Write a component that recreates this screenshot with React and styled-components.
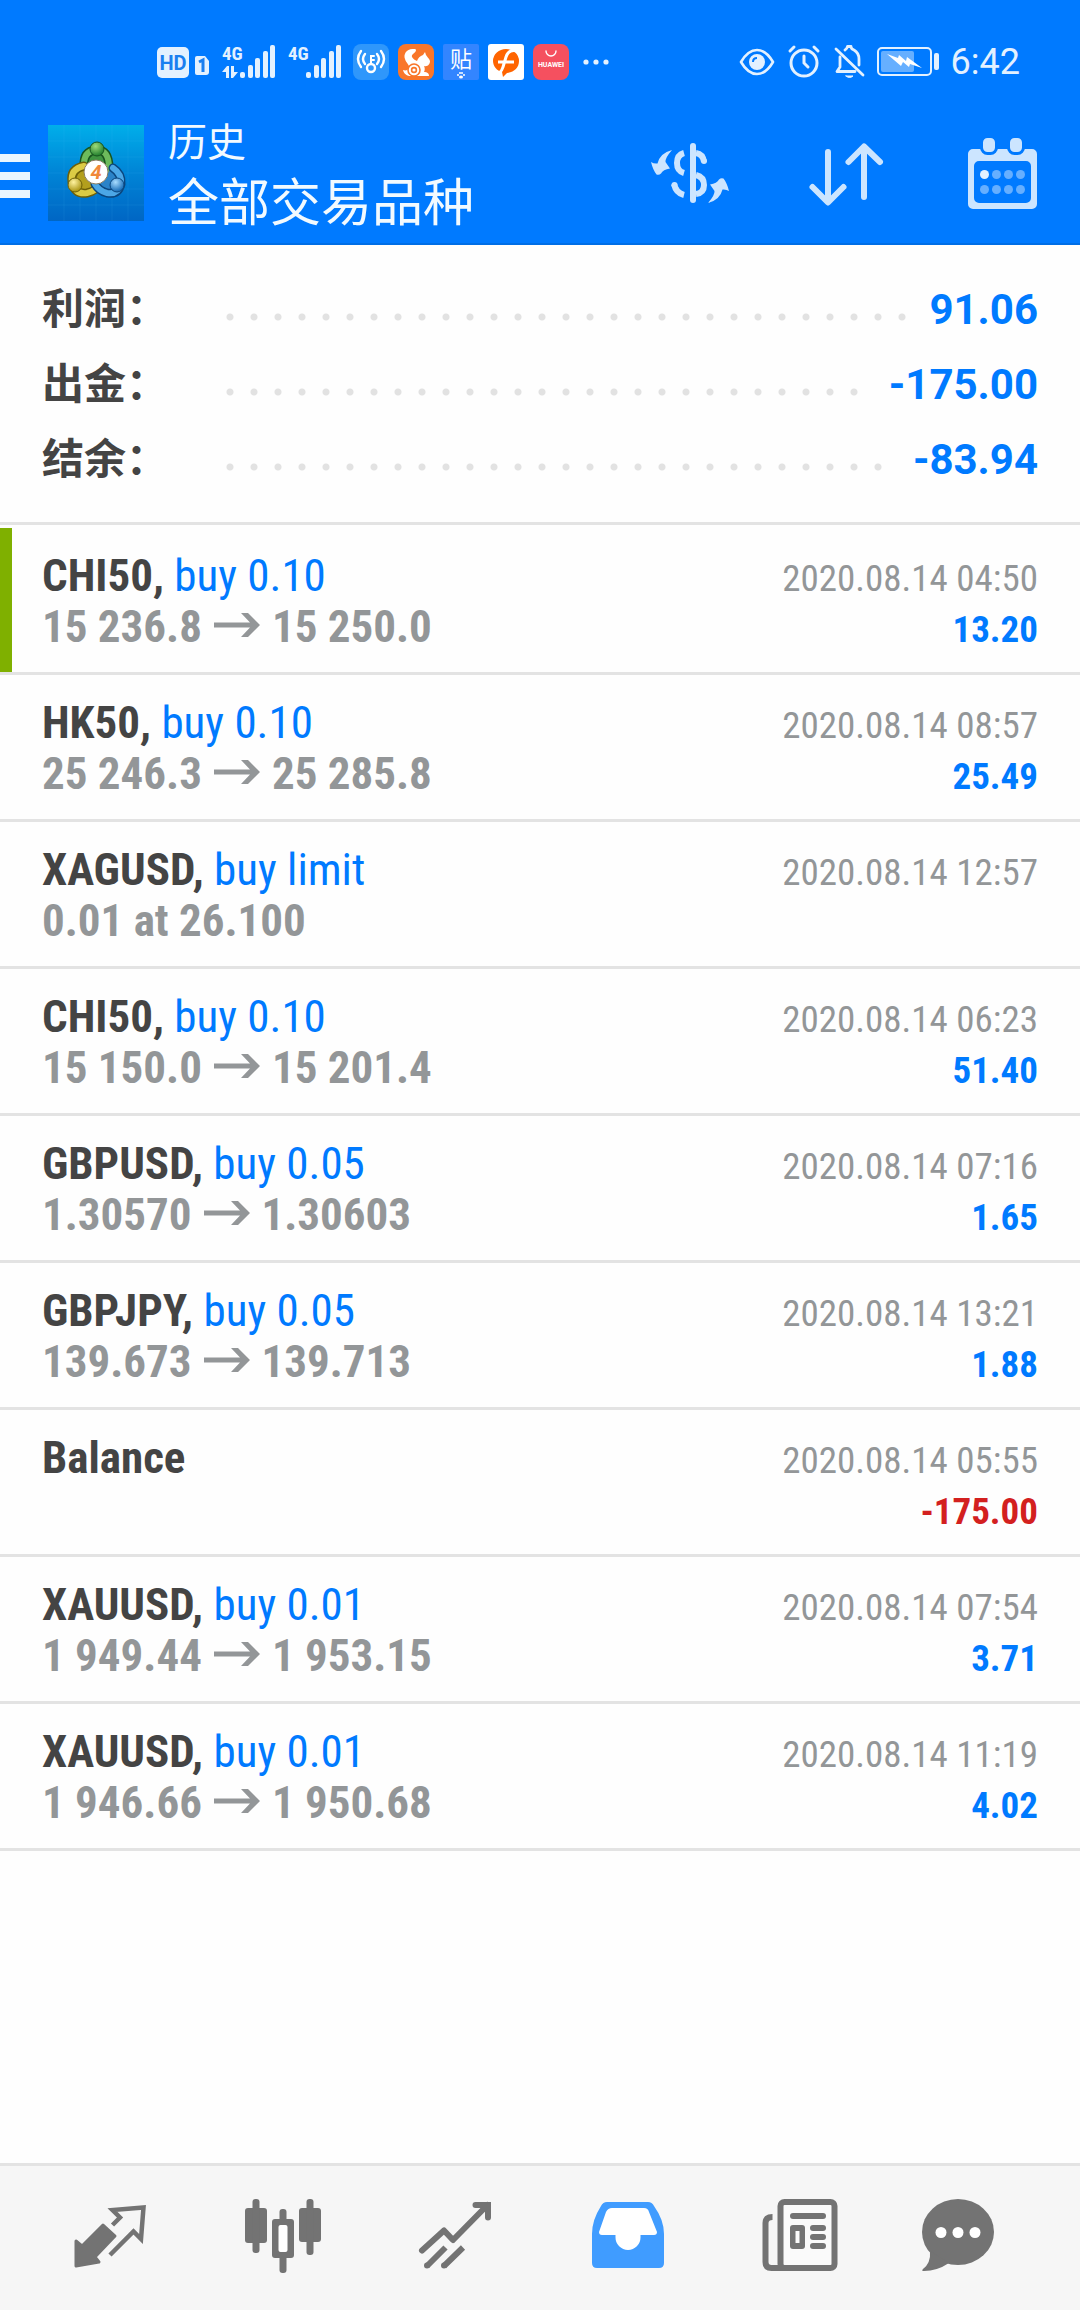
import React from 'react';
import styled, { createGlobalStyle } from 'styled-components';

const CONDENSED = '"Roboto Condensed", "Liberation Sans Narrow", "Noto Sans CJK SC", sans-serif';

const summary = [
    { label: '利润：', value: '91.06' },
    { label: '出金：', value: '-175.00' },
    { label: '结余：', value: '-83.94' },
];

const deals = [
    { symbol: 'CHI50', action: 'buy 0.10', from: '15 236.8', to: '15 250.0', time: '2020.08.14 04:50', profit: '13.20', marked: true },
    { symbol: 'HK50', action: 'buy 0.10', from: '25 246.3', to: '25 285.8', time: '2020.08.14 08:57', profit: '25.49' },
    { symbol: 'XAGUSD', action: 'buy limit', note: '0.01 at 26.100', time: '2020.08.14 12:57' },
    { symbol: 'CHI50', action: 'buy 0.10', from: '15 150.0', to: '15 201.4', time: '2020.08.14 06:23', profit: '51.40' },
    { symbol: 'GBPUSD', action: 'buy 0.05', from: '1.30570', to: '1.30603', time: '2020.08.14 07:16', profit: '1.65' },
    { symbol: 'GBPJPY', action: 'buy 0.05', from: '139.673', to: '139.713', time: '2020.08.14 13:21', profit: '1.88' },
    { symbol: 'Balance', time: '2020.08.14 05:55', profit: '-175.00', loss: true },
    { symbol: 'XAUUSD', action: 'buy 0.01', from: '1 949.44', to: '1 953.15', time: '2020.08.14 07:54', profit: '3.71' },
    { symbol: 'XAUUSD', action: 'buy 0.01', from: '1 946.66', to: '1 950.68', time: '2020.08.14 11:19', profit: '4.02' },
];

/* ---------- status bar icons ---------- */

const HdIcon = () => (
    <svg width="52" height="36" viewBox="0 0 52 36">
        <rect x="0" y="3" width="32" height="31" rx="5" fill="#e3f1ff" />
        <text x="16" y="26" textAnchor="middle" fontFamily="Roboto, sans-serif" fontSize="20" fontWeight="700" fill="#1a7ff0">HD</text>
        <path d="M40 12h8l4 5v11a3 3 0 0 1-3 3h-9a2 2 0 0 1-2-2V14a2 2 0 0 1 2-2z" fill="#e3f1ff" />
        <path d="M42 18l4-2v12" fill="none" stroke="#1a7ff0" strokeWidth="3" />
    </svg>
);

const SignalIcon = ({ data }) => (
    <svg width="54" height="36" viewBox="0 0 54 36" fill="#e3f1ff">
        <text x="1" y="16" fontFamily={CONDENSED} fontSize="19" fontWeight="700">4G</text>
        {data && <path d="M1 28l5-6h2v12H5v-6zM10 22h3v6h4l-5 6h-2z" />}
        <rect x="19" y="28" width="5" height="6" rx="2" />
        <rect x="27" y="21" width="5" height="13" rx="2" />
        <rect x="34" y="14" width="5" height="20" rx="2" />
        <rect x="42" y="7" width="5" height="27" rx="2" />
        <rect x="49" y="1" width="5" height="33" rx="2" />
    </svg>
);

const WifiKeyIcon = () => (
    <svg width="36" height="36" viewBox="0 0 36 36">
        <rect width="36" height="36" rx="8" fill="#2f97fb" />
        <g fill="none" stroke="#fff" strokeWidth="2.4" strokeLinecap="round">
            <circle cx="18" cy="24" r="4" />
            <path d="M18 20v-8h3M18 16h3" strokeWidth="2" />
            <path d="M12 10q-4 5 0 10M8 7q-6 8 0 16M24 10q4 5 0 10M28 7q6 8 0 16" />
        </g>
    </svg>
);

const SquirrelIcon = () => (
    <svg width="36" height="36" viewBox="0 0 36 36">
        <rect width="36" height="36" rx="8" fill="#f9762a" />
        <path d="M16 5C9 4 5 10 7 15c1 4 5 6 4 9-1 2-3 3-6 2 1 4 4 6 8 6h18c0-3-2-4-5-4 1-2 1-4 0-6 4 1 6-2 6-5-1-3-3-4-4-6l-1-3-2 3c-3 1-5 3-6 6-2-1-4-2-5-4-1-3 4-4 4-7 0-1-1-1-2-1z" fill="#fff" />
        <circle cx="16" cy="26" r="6" fill="#fff" stroke="#f9762a" strokeWidth="1.600" />
        <circle cx="16" cy="26" r="2.400" fill="none" stroke="#f9762a" strokeWidth="1.600" />
    </svg>
);

const TiebaIcon = () => (
    <svg width="36" height="36" viewBox="0 0 36 36">
        <rect width="36" height="36" rx="2" fill="#3385ff" />
        <text x="18" y="23" textAnchor="middle" fontFamily='"Noto Sans CJK SC", sans-serif' fontSize="22" fill="#fff">贴</text>
        <g fill="#fff">
            <ellipse cx="18" cy="33" rx="2" ry="1.500" />
            <circle cx="15" cy="31" r="1" />
            <circle cx="17" cy="29" r="1" />
            <circle cx="19" cy="29" r="1" />
            <circle cx="21" cy="31" r="1" />
        </g>
    </svg>
);

const FlipIcon = () => (
    <svg width="36" height="36" viewBox="0 0 36 36">
        <rect width="36" height="36" rx="3" fill="#fff" />
        <path d="M18 5a13 12 0 0 1 13 12c0 7-5 11-12 12l-4 4-1-5C9 27 5 22 5 17A13 12 0 0 1 18 5z" fill="#ff6400" />
        <path d="M32 8c-8-3-12-1-14 5l-3 10q-1 4-4 6M10 18h16" fill="none" stroke="#fff" strokeWidth="3" />
    </svg>
);

const HuaweiIcon = () => (
    <svg width="36" height="36" viewBox="0 0 36 36">
        <rect width="36" height="36" rx="8" fill="#f5505f" />
        <path d="M13 7a5 5 0 0 0 10 0" fill="none" stroke="#fff" strokeWidth="1.4" strokeLinecap="round" />
        <text x="18" y="23" textAnchor="middle" fontFamily="Roboto, sans-serif" fontSize="7" fontWeight="700" fill="#fff">HUAWEI</text>
    </svg>
);

const MoreIcon = () => (
    <svg width="36" height="36" viewBox="0 0 36 36" fill="#e3f1ff">
        <circle cx="8" cy="18" r="2.6" />
        <circle cx="18" cy="18" r="2.6" />
        <circle cx="28" cy="18" r="2.6" />
    </svg>
);

const EyeIcon = () => (
    <svg width="36" height="36" viewBox="0 0 36 36" fill="none" stroke="#e3f1ff" strokeWidth="2.6">
        <path d="M2 18Q9 6 18 6t16 12Q27 30 18 30T2 18z" strokeLinejoin="round" />
        <circle cx="18" cy="18" r="8" fill="#e3f1ff" stroke="none" />
        <path d="M14 18q0-4 4-4" stroke="#007aff" strokeWidth="2" />
    </svg>
);

const AlarmIcon = () => (
    <svg width="34" height="36" viewBox="0 0 34 36" fill="none" stroke="#e3f1ff" strokeWidth="3" strokeLinecap="round">
        <circle cx="17" cy="19" r="13" />
        <path d="M17 12v7l4 4M3 7l4-4M31 7l-4-4" />
    </svg>
);

const BellOffIcon = () => (
    <svg width="32" height="36" viewBox="0 0 32 36" fill="none" stroke="#e3f1ff" strokeWidth="2.8" strokeLinecap="round" strokeLinejoin="round">
        <path d="M3 5l27 26" />
        <path d="M7 13v10l-3 4.500h18M12 6q2-1 2.500-3.500h3.500q0 2.500 3 3.500 5 3 5 9v6" />
        <path d="M13 32h7q-3.500 3-7 0z" fill="#e3f1ff" strokeWidth="1" />
    </svg>
);

const BatteryIcon = () => (
    <svg width="62" height="36" viewBox="0 0 62 36">
        <rect x="1" y="4" width="53" height="27" rx="4" fill="none" stroke="#e3f1ff" strokeWidth="2" />
        <rect x="4" y="7" width="33" height="21" rx="2" fill="#66afff" />
        <path d="M10 10l11 4 1-3 7 6 1-4 15 11-12-4-1 3-6-5-2 4z" fill="#fff" />
        <rect x="57" y="9" width="5" height="17" rx="2" fill="#e3f1ff" />
    </svg>
);

/* ---------- toolbar icons ---------- */

const MenuIcon = () => (
    <svg width="30" height="96" viewBox="0 0 30 96" fill="#eaf6ff">
        <rect y="29" width="30" height="8" />
        <rect y="47" width="30" height="8" />
        <rect y="65" width="30" height="8" />
    </svg>
);

const Logo = () => (
    <svg width="96" height="96" viewBox="0 0 96 96">
        <defs>
            <linearGradient id="tile" x1="0" y1="0" x2="0" y2="1">
                <stop offset="0" stopColor="#00aeea" />
                <stop offset="0.5" stopColor="#0084d6" />
                <stop offset="1" stopColor="#0066c4" />
            </linearGradient>
            <radialGradient id="green" cx="0.4" cy="0.3" r="0.7">
                <stop offset="0" stopColor="#9fdc7a" />
                <stop offset="1" stopColor="#1f7d2c" />
            </radialGradient>
            <radialGradient id="yellow" cx="0.4" cy="0.3" r="0.7">
                <stop offset="0" stopColor="#fff3a0" />
                <stop offset="1" stopColor="#a8920e" />
            </radialGradient>
            <radialGradient id="sky" cx="0.4" cy="0.3" r="0.7">
                <stop offset="0" stopColor="#a8dcff" />
                <stop offset="1" stopColor="#1268b4" />
            </radialGradient>
        </defs>
        <rect width="96" height="96" fill="url(#tile)" />
        <path d="M0 16h96M0 32h96M0 48h96M0 64h96M0 80h96M16 0v96M32 0v96M48 0v96M64 0v96M80 0v96" stroke="#5cc8ff" strokeOpacity="0.1" />
        <g strokeLinecap="round">
            <path d="M36 42q-1-16 12-17t13 18q0 8-3 13" fill="#3f9440" stroke="#18551f" strokeWidth="9" />
            <path d="M36 42q-1-16 12-17t13 18q0 8-3 13" fill="none" stroke="#6dbb5c" strokeWidth="6" />
            <path d="M36 41q-14 3-12 16 3 13 15 11 5-1 9-4" fill="#b39f1d" stroke="#6d5f08" strokeWidth="9" />
            <path d="M36 41q-14 3-12 16 3 13 15 11 5-1 9-4" fill="none" stroke="#dccb45" strokeWidth="6" />
            <path d="M65 43q9 6 8 16-3 11-14 9-8-2-12-9" fill="#2b83c8" stroke="#0b467e" strokeWidth="9" />
            <path d="M65 43q9 6 8 16-3 11-14 9-8-2-12-9" fill="none" stroke="#4ba7e6" strokeWidth="6" />
        </g>
        <circle cx="49" cy="24" r="7" fill="url(#green)" stroke="#18551f" />
        <circle cx="27" cy="60" r="7" fill="url(#yellow)" stroke="#6d5f08" />
        <circle cx="69" cy="60" r="7" fill="url(#sky)" stroke="#0b467e" />
        <circle cx="48" cy="47" r="12" fill="#fff" stroke="#8a7d62" strokeWidth="1" />
        <text x="48" y="54" textAnchor="middle" fontFamily="Roboto, sans-serif" fontSize="20" fontWeight="700" fontStyle="italic" fill="#f0883a">4</text>
    </svg>
);

const CurrencyIcon = () => (
    <svg width="90" height="90" viewBox="0 0 90 90" fill="none" stroke="#cce5ff" strokeWidth="6">
        <path d="M48 18v54" strokeLinecap="round" />
        <path d="M39 25q-7 2-7 10t7 10M29 56q2 9 10 11M51 25q7 1 8 9M51 47q8 2 8 10t-8 9" />
        <circle cx="29.500" cy="57" r="3" fill="#cce5ff" stroke="none" />
        <circle cx="59" cy="33" r="3" fill="#cce5ff" stroke="none" />
        <g fill="#cce5ff" stroke="none">
            <path d="M27 22q-7 8-6.500 12l4.500 6.500q-7 1-9 5-2 2-4.500 1Q8 42 6 34q3 2 6.500 1.500Q15 25 27 22z" />
            <path d="M27 22q-7 8-6.500 12l4.500 6.500q-7 1-9 5-2 2-4.500 1Q8 42 6 34q3 2 6.500 1.500Q15 25 27 22z" transform="rotate(180 45 48.500)" />
        </g>
    </svg>
);

const SortIcon = () => (
    <svg width="90" height="90" viewBox="0 0 90 90" fill="none" stroke="#cce5ff" strokeWidth="6" strokeLinecap="round" strokeLinejoin="round">
        <path d="M27 24v50M11.500 59L27 74.500 42.500 59M63 69V19M47.500 34L63 18.500 79 34" />
    </svg>
);

const CalendarIcon = () => (
    <svg width="90" height="90" viewBox="0 0 90 90">
        <path fillRule="evenodd" fill="#cce5ff" d="M16 21h59a5 5 0 0 1 5 5v50a5 5 0 0 1-5 5H16a5 5 0 0 1-5-5V26a5 5 0 0 1 5-5zM22 33a5 5 0 0 0-5 5v32a5 5 0 0 0 5 5h47a5 5 0 0 0 5-5V38a5 5 0 0 0-5-5z" />
        <g fill="#cce5ff" stroke="#007aff" strokeWidth="3">
            <rect x="24.500" y="8.500" width="15" height="17" rx="6" />
            <rect x="51.500" y="8.500" width="15" height="17" rx="6" />
        </g>
        <g fill="#66afff">
            <circle cx="27.500" cy="46.500" r="4.500" fill="#e3f1ff" />
            <circle cx="39.500" cy="46.500" r="4.500" />
            <circle cx="51.500" cy="46.500" r="4.500" />
            <circle cx="63.500" cy="46.500" r="4.500" />
            <circle cx="27.500" cy="61.500" r="4.500" />
            <circle cx="39.500" cy="61.500" r="4.500" />
            <circle cx="51.500" cy="61.500" r="4.500" />
            <circle cx="63.500" cy="61.500" r="4.500" />
        </g>
    </svg>
);

const ArrowIcon = () => (
    <Arrow width="46" height="26" viewBox="0 0 46 26">
        <path d="M0 10.500h36L27 1h7l12 12-12 12h-7l9-9.500H0z" fill="#939698" />
    </Arrow>
);

/* ---------- tab bar icons ---------- */

const TabIcon = ({ children }) => (
    <svg width="90" height="90" viewBox="0 0 90 90" fill="#737373">{children}</svg>
);

const tabs = [
    {
        label: '行情',
        icon: (
            <TabIcon>
                <path d="M47.500 32l7.500-7.500L47.500 17l31-2.500-2.500 31.500-7.500-7.500-23.500 23.500" fill="none" stroke="#737373" strokeWidth="4.500" />
                <path d="M38 32l12 11-20 21 4 5-23 4V48l6 5z" stroke="#737373" strokeWidth="3" strokeLinejoin="round" />
            </TabIcon>
        ),
    },
    {
        label: '图表',
        icon: (
            <TabIcon>
                <rect x="7" y="15" width="22" height="35" rx="3" />
                <rect x="14.500" y="6" width="7" height="54" rx="3" />
                <rect x="61" y="15" width="22" height="34" rx="3" />
                <rect x="68.500" y="6" width="7" height="56" rx="3" />
                <rect x="41.500" y="16" width="7" height="64" rx="3" />
                <rect x="34" y="26" width="22" height="39" rx="3" />
                <rect x="40.500" y="32" width="9" height="27" rx="2" fill="#fff" />
            </TabIcon>
        ),
    },
    {
        label: '交易',
        icon: (
            <TabIcon>
                <g fill="none" stroke="#737373" strokeWidth="6">
                    <path d="M12 57.500L34 37.500l9 9.500 34.500-35" strokeLinejoin="round" strokeLinecap="round" />
                    <path d="M65.500 12H78v12.500" strokeLinecap="round" />
                    <path d="M17 73l18.500-18.500M34 73l19-18.500" />
                </g>
                <circle cx="17" cy="72.500" r="3" />
                <circle cx="34" cy="72.500" r="3" />
            </TabIcon>
        ),
    },
    {
        label: '历史',
        active: true,
        icon: (
            <TabIcon>
                <path d="M24 9h41q4 0 6 4 10 14 10 28v29q0 5-5 5H14q-5 0-5-5V41q0-14 9-28 2-4 6-4z" fill="#409cff" />
                <path d="M29 15h32q4 0 5 4l8 20q0 3-3 3H57.500v2.500a12.500 12.500 0 0 1-25 0V42H19q-3 0-3-3l7-20q2-4 6-4z" fill="#fff" />
            </TabIcon>
        ),
    },
    {
        label: '新闻',
        icon: (
            <TabIcon>
                <g fill="none" stroke="#737373" strokeWidth="6">
                    <rect x="25.500" y="9" width="54" height="66" rx="4" fill="#fafafa" />
                    <path d="M17.500 24q-7 0-7 6v39q0 6 6 6H30" />
                </g>
                <rect x="35" y="20" width="36" height="6" rx="3" />
                <rect x="35" y="32" width="15" height="24" rx="3" />
                <rect x="40.500" y="38" width="4" height="12" fill="#fafafa" />
                <rect x="55" y="32" width="16" height="6" rx="3" />
                <rect x="55" y="41" width="16" height="6" rx="3" />
                <rect x="55" y="50" width="16" height="6" rx="3" />
            </TabIcon>
        ),
    },
    {
        label: '聊天',
        icon: (
            <TabIcon>
                <ellipse cx="45" cy="39" rx="36" ry="33" />
                <path d="M17 58q1 12-7 18-2 2 1 2 13 0 25-8z" />
                <circle cx="28" cy="39.500" r="5.500" fill="#fff" />
                <circle cx="45" cy="39.500" r="5.500" fill="#fff" />
                <circle cx="62" cy="39.500" r="5.500" fill="#fff" />
            </TabIcon>
        ),
    },
];

const Deal = (props) => {
    const { symbol, action, from, to, note, time, profit, loss, marked } = props;
    return (
        <Row $marked={marked}>
            <Line>
                <Name>
                    {symbol}{action && ', '}
                    {action && <Action>{action}</Action>}
                </Name>
                <Time>{time}</Time>
            </Line>
            <Line>
                <Price>{note || (from && <>{from}<ArrowIcon />{to}</>)}</Price>
                {profit && <Profit $loss={loss}>{profit}</Profit>}
            </Line>
        </Row>
    );
};

const App = () => (
    <Page>
        <GlobalStyle />
        <Header>
            <StatusBar>
                <StatusGroup $gap={12}>
                    <HdIcon />
                    <SignalIcon data />
                    <SignalIcon />
                    <StatusGroup $gap={9}>
                        <WifiKeyIcon />
                        <SquirrelIcon />
                        <TiebaIcon />
                        <FlipIcon />
                        <HuaweiIcon />
                        <MoreIcon />
                    </StatusGroup>
                </StatusGroup>
                <StatusGroup $gap={12}>
                    <EyeIcon />
                    <AlarmIcon />
                    <BellOffIcon />
                    <BatteryIcon />
                    <Clock>6:42</Clock>
                </StatusGroup>
            </StatusBar>
            <Toolbar>
                <IconButton aria-label="菜单"><MenuIcon /></IconButton>
                <Logo />
                <Titles>
                    <Section>历史</Section>
                    <Title>全部交易品种</Title>
                </Titles>
                <Actions>
                    <IconButton aria-label="货币"><CurrencyIcon /></IconButton>
                    <IconButton aria-label="排序"><SortIcon /></IconButton>
                    <IconButton aria-label="日期"><CalendarIcon /></IconButton>
                </Actions>
            </Toolbar>
        </Header>
        <Summary>
            {summary.map(({ label, value }) => (
                <SummaryRow key={label}>
                    <Label>{label}</Label>
                    <Value>{value}</Value>
                </SummaryRow>
            ))}
        </Summary>
        <List>
            {deals.map((deal) => <Deal key={deal.time} {...deal} />)}
        </List>
        <TabBar>
            {tabs.map(({ label, icon, active }) => (
                <IconButton key={label} aria-label={label} aria-current={active ? 'page' : undefined}>{icon}</IconButton>
            ))}
        </TabBar>
    </Page>
);

const GlobalStyle = createGlobalStyle`
    * {
        box-sizing: border-box;
    }
    body {
        margin: 0;
        background-color: #fefefe;
    }
    svg {
        display: block;
        flex-shrink: 0;
        overflow: visible;
    }
`;

const Page = styled.div`
    display: flex;
    flex-direction: column;
    min-height: 100vh;
    font-family: ${CONDENSED};
    color: #444;
`;

const Header = styled.header`
    background-color: #007aff;
    border-bottom: 2px solid #006ee6;
    color: #f2faff;
`;

const StatusBar = styled.div`
    display: flex;
    justify-content: space-between;
    align-items: center;
    height: 84px;
    padding: 40px 60px 0 157px;
`;

const StatusGroup = styled.div`
    display: flex;
    align-items: center;
    gap: ${p => p.$gap}px;
`;

const Clock = styled.span`
    font-family: Roboto, sans-serif;
    font-size: 36px;
    line-height: 44px;
    color: #e3f1ff;
`;

const Toolbar = styled.div`
    display: flex;
    align-items: center;
    height: 159px;
    padding: 18px 33px 0 0;

    > svg {
        margin-left: 18px;
    }
`;

const IconButton = styled.button`
    display: flex;
    justify-content: center;
    align-items: center;
    padding: 0;
    border: 0;
    background: none;
    cursor: pointer;
`;

const Titles = styled.div`
    flex: 1;
    margin-left: 24px;
    padding-top: 4px;
    font-family: Roboto, "Noto Sans CJK SC", sans-serif;
`;

const Section = styled.div`
    font-size: 39px;
    line-height: 58px;
`;

const Title = styled.h1`
    margin: 0;
    font-size: 51px;
    font-weight: 400;
    line-height: 64px;
`;

const Actions = styled.div`
    display: flex;
    gap: 66px;
`;

const Summary = styled.dl`
    margin: 0;
    padding: 27px 42px 25px;
    border-bottom: 3px solid #e3e3e3;
`;

const SummaryRow = styled.div`
    display: flex;
    height: 75px;
    font-family: Roboto, "Noto Sans CJK SC", sans-serif;
    font-size: 42px;
    font-weight: 700;
    line-height: 75px;

    /* dotted leader between the label and the value */
    &::before {
        content: '';
        order: 1;
        flex: 1;
        margin: 0 20px 0 0;
        background: radial-gradient(circle at 4px 4px, #e2e2e2 3px, transparent 4px) 0 41px / 24px 75px;
    }
`;

const Label = styled.dt`
    width: 184px;
`;

const Value = styled.dd`
    order: 2;
    margin: 0;
    color: #007aff;
`;

const List = styled.ul`
    flex: 1;
    margin: 0;
    padding: 3px 0 0;
    list-style: none;
`;

const Row = styled.li`
    height: 147px;
    padding: 22px 42px 0;
    border-bottom: 3px solid #e3e3e3;
    background: ${p => p.$marked ? 'linear-gradient(#7fb000, #7fb000) 0 0 / 12px 100% no-repeat' : 'none'};
`;

const Line = styled.div`
    display: flex;
    justify-content: space-between;
    align-items: baseline;
    height: 51px;
    line-height: 51px;
`;

const Name = styled.span`
    font-size: 45px;
    font-weight: 700;
`;

const Action = styled.span`
    font-weight: 400;
    color: #007aff;
`;

const Time = styled.time`
    font-size: 37px;
    color: #939698;
`;

const Price = styled.span`
    font-size: 45px;
    font-weight: 700;
    color: #939698;

    /* keeps the baseline when there is no price */
    &:empty::before {
        content: '\\200b';
    }
`;

const Arrow = styled.svg`
    display: inline-block;
    margin: 0 12px 4px;
`;

const Profit = styled.span`
    font-size: 37px;
    font-weight: 700;
    color: ${p => p.$loss ? '#d3201f' : '#007aff'};
`;

const TabBar = styled.nav`
    position: sticky;
    bottom: 0;
    display: grid;
    grid-template-columns: repeat(5, 6fr) 5fr;
    height: 147px;
    padding: 0 50px 0 24px;
    border-top: 3px solid #e3e3e3;
    background-color: #f6f6f6;
`;

export default App;
